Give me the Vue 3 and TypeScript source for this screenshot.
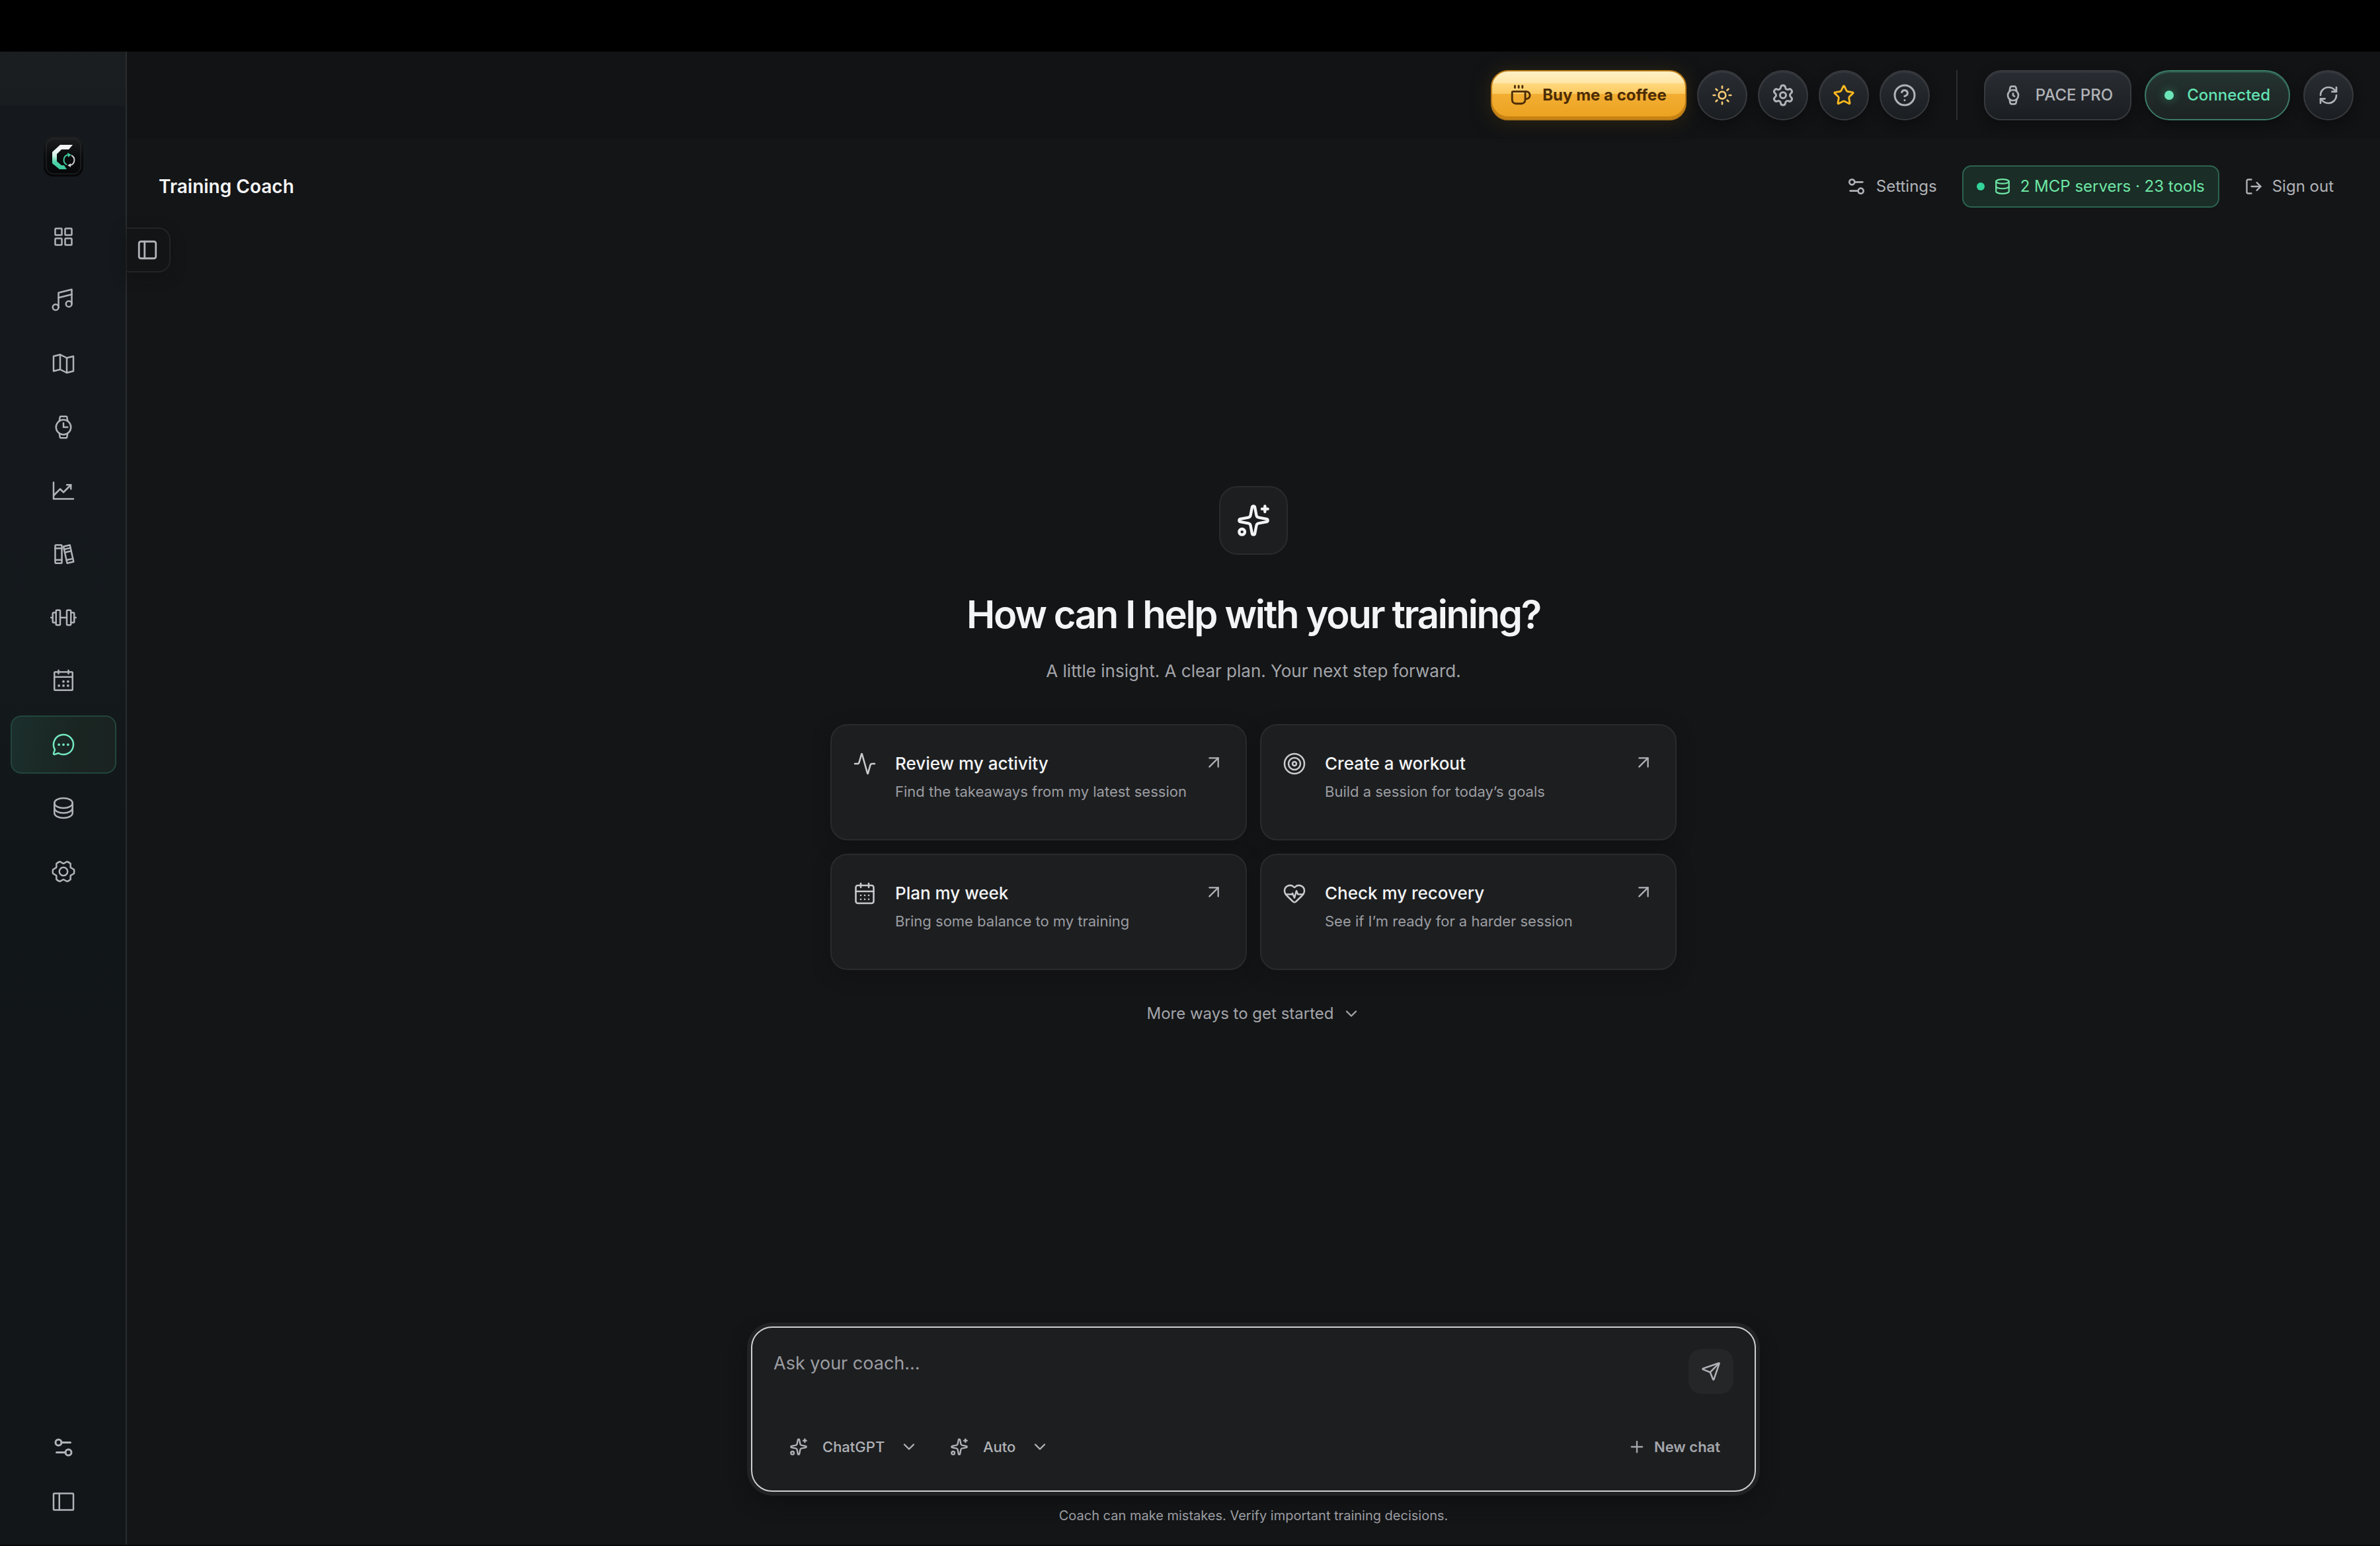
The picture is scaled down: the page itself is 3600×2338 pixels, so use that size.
<script setup lang="ts">
import { h, ref } from 'vue'

interface Glyph {
  box: number
  stroke: number
  lines: string[]
  dots?: string[]
}

const circle = (x: number, y: number, r: number): string =>
  `M${x - r} ${y}a${r} ${r} 0 1 0 ${2 * r} 0a${r} ${r} 0 1 0 ${-2 * r} 0Z`

const rect = (x: number, y: number, w: number, t: number, r: number): string =>
  `M${x + r} ${y}h${w - 2 * r}a${r} ${r} 0 0 1 ${r} ${r}v${t - 2 * r}a${r} ${r} 0 0 1 ${-r} ${r}h${2 * r - w}a${r} ${r} 0 0 1 ${-r} ${-r}v${2 * r - t}a${r} ${r} 0 0 1 ${r} ${-r}Z`

const large = (lines: string[], dots: string[] = []): Glyph => ({ box: 256, stroke: 16, lines, dots })
const small = (stroke: number, lines: string[]): Glyph => ({ box: 24, stroke, lines })

const glyphs: Record<string, Glyph> = {
  dashboard: large([rect(48, 48, 64, 64, 8), rect(144, 48, 64, 64, 8), rect(48, 144, 64, 64, 8), rect(144, 144, 64, 64, 8)]),
  music: large([circle(180, 164, 28), circle(52, 196, 28), 'M208 72L80 104', 'M80 196V56L208 24V164']),
  map: large(['M160 216L96 184L32 200V56L96 40L160 72L224 56V200Z', 'M160 72V216', 'M96 40V184']),
  clock: large([
    circle(128, 128, 72),
    'M128 88V128H168',
    'M88 68L94 31a8 8 0 0 1 8-7H154a8 8 0 0 1 8 7L168 68',
    'M88 188L94 225a8 8 0 0 0 8 7H154a8 8 0 0 0 8-7L168 188',
  ]),
  chart: large(['M224 208H32V48', 'M200 72L128 144L96 112L32 176', 'M200 112V72H160']),
  books: large([rect(48, 40, 64, 176, 8), 'M48 72H112', 'M48 184H112', 'M128 54L190 40L226 202L164 216Z', 'M134 82L196 68', 'M141 112L203 98', 'M157 186L219 172']),
  barbell: large([
    rect(56, 56, 40, 144, 8),
    rect(160, 56, 40, 144, 8),
    'M56 176H32a8 8 0 0 1-8-8V88a8 8 0 0 1 8-8H56',
    'M200 176h24a8 8 0 0 0 8-8V88a8 8 0 0 0-8-8H200',
    'M96 128H160',
    'M8 128H24',
    'M232 128H248',
  ]),
  calendar: large(
    [rect(40, 40, 176, 176, 8), 'M176 24V56', 'M80 24V56', 'M40 88H216'],
    [circle(128, 132, 12), circle(172, 132, 12), circle(84, 172, 12), circle(128, 172, 12), circle(172, 172, 12)],
  ),
  chat: large(
    ['M79.93 211.11a96 96 0 1 0-35-35L32.42 213.46a8 8 0 0 0 10.12 10.12Z'],
    [circle(84, 128, 12), circle(128, 128, 12), circle(172, 128, 12)],
  ),
  database: large([
    'M40 80a88 48 0 1 0 176 0a88 48 0 1 0-176 0Z',
    'M40 80v48c0 26.51 39.4 48 88 48s88-21.49 88-48V80',
    'M40 128v48c0 26.51 39.4 48 88 48s88-21.49 88-48v-48',
  ]),
  gear: large([
    circle(128, 128, 40),
    'M130.05,206.11c-1.34,0-2.69,0-4,0L94,224a104.61,104.61,0,0,1-34.11-19.2l-.12-36c-.71-1.12-1.38-2.25-2-3.41L25.9,147.24a99.15,99.15,0,0,1,0-38.46l31.84-18.1c.65-1.15,1.32-2.29,2-3.41l.16-36A104.58,104.58,0,0,1,94,32l32,17.89c1.34,0,2.69,0,4,0L162,32a104.61,104.61,0,0,1,34.11,19.2l.12,36c.71,1.12,1.38,2.25,2,3.41l31.85,18.14a99.15,99.15,0,0,1,0,38.46l-31.84,18.1c-.65,1.15-1.32,2.29-2,3.41l-.16,36A104.58,104.58,0,0,1,162,224Z',
  ]),
  sidebar: large([rect(32, 48, 192, 160, 8), 'M88 48V208']),
  panel: small(2, [rect(3, 3, 18, 18, 2), 'M9 3V21']),
  sliders: small(2, [circle(7, 7, 3), circle(17, 17, 3), 'M14 17H5', 'M19 7h-9']),
  coffee: small(2, ['M10 2v2', 'M14 2v2', 'M6 2v2', 'M16 8a1 1 0 0 1 1 1v8a4 4 0 0 1-4 4H7a4 4 0 0 1-4-4V9a1 1 0 0 1 1-1h14a4 4 0 1 1 0 8h-1']),
  sun: small(2, [circle(12, 12, 4), 'M12 2v2', 'M12 20v2', 'm4.93 4.93 1.41 1.41', 'm17.66 17.66 1.41 1.41', 'M2 12h2', 'M20 12h2', 'm6.34 17.66-1.41 1.41', 'm19.07 4.93-1.41 1.41']),
  settings: small(2, [
    circle(12, 12, 3),
    'M9.671 4.136a2.34 2.34 0 0 1 4.659 0 2.34 2.34 0 0 0 3.319 1.915 2.34 2.34 0 0 1 2.33 4.033 2.34 2.34 0 0 0 0 3.831 2.34 2.34 0 0 1-2.33 4.033 2.34 2.34 0 0 0-3.319 1.915 2.34 2.34 0 0 1-4.659 0 2.34 2.34 0 0 0-3.32-1.915 2.34 2.34 0 0 1-2.33-4.033 2.34 2.34 0 0 0 0-3.831A2.34 2.34 0 0 1 6.35 6.051a2.34 2.34 0 0 0 3.319-1.915',
  ]),
  star: small(2, ['M11.525 2.295a.53.53 0 0 1 .95 0l2.31 4.679a2.123 2.123 0 0 0 1.595 1.16l5.166.756a.53.53 0 0 1 .294.904l-3.736 3.638a2.123 2.123 0 0 0-.611 1.878l.882 5.14a.53.53 0 0 1-.771.56l-4.618-2.428a2.122 2.122 0 0 0-1.973 0L6.396 21.01a.53.53 0 0 1-.77-.56l.881-5.139a2.122 2.122 0 0 0-.611-1.879L2.16 9.795a.53.53 0 0 1 .294-.906l5.165-.755a2.122 2.122 0 0 0 1.597-1.16z']),
  help: small(2, [circle(12, 12, 10), 'M9.09 9a3 3 0 0 1 5.83 1c0 2-3 3-3 3', 'M12 17h.01']),
  watch: small(2, [circle(12, 12, 6), 'M12 10v2.2l1.6 1', 'm16.13 7.66-.81-4.05a2 2 0 0 0-2-1.61h-2.68a2 2 0 0 0-2 1.61l-.78 4.05', 'm7.88 16.36.8 4a2 2 0 0 0 2 1.61h2.72a2 2 0 0 0 2-1.61l.81-4.05']),
  refresh: small(2, ['M3 12a9 9 0 0 1 9-9 9.75 9.75 0 0 1 6.74 2.74L21 8', 'M21 3v5h-5', 'M21 12a9 9 0 0 1-9 9 9.75 9.75 0 0 1-6.74-2.74L3 16', 'M8 16H3v5']),
  servers: small(2, ['M3 5a9 3 0 1 0 18 0a9 3 0 1 0-18 0Z', 'M3 5v14a9 3 0 0 0 18 0V5', 'M3 12a9 3 0 0 0 18 0']),
  signout: small(2, ['m16 17 5-5-5-5', 'M21 12H9', 'M9 21H5a2 2 0 0 1-2-2V5a2 2 0 0 1 2-2h4']),
  sparkles: small(2, [
    'M11.017 2.814a1 1 0 0 1 1.966 0l1.051 5.558a2 2 0 0 0 1.594 1.594l5.558 1.051a1 1 0 0 1 0 1.966l-5.558 1.051a2 2 0 0 0-1.594 1.594l-1.051 5.558a1 1 0 0 1-1.966 0l-1.051-5.558a2 2 0 0 0-1.594-1.594l-5.558-1.051a1 1 0 0 1 0-1.966l5.558-1.051a2 2 0 0 0 1.594-1.594z',
    'M20 2v4',
    'M22 4h-4',
    circle(4, 20, 2),
  ]),
  activity: small(1.7, ['M22 12h-2.48a2 2 0 0 0-1.93 1.46l-2.35 8.36a.25.25 0 0 1-.48 0L9.24 2.18a.25.25 0 0 0-.48 0l-2.35 8.36A2 2 0 0 1 4.49 12H2']),
  target: small(1.7, [circle(12, 12, 10), circle(12, 12, 6), circle(12, 12, 2)]),
  week: small(1.7, [rect(3, 4, 18, 18, 2), 'M8 2v4', 'M16 2v4', 'M3 10h18', 'M8 14h.01', 'M12 14h.01', 'M16 14h.01', 'M8 18h.01', 'M12 18h.01', 'M16 18h.01']),
  heart: small(1.7, [
    'M2 9.5a5.5 5.5 0 0 1 9.591-3.676.56.56 0 0 0 .818 0A5.49 5.49 0 0 1 22 9.5c0 2.29-1.5 4-3 5.5l-5.492 5.313a2 2 0 0 1-3 .019L5 15c-1.5-1.5-3-3.2-3-5.5',
    'M3.22 13H9.5l.5-1 2 4.5 2-7 1.5 3.5h5.27',
  ]),
  arrow: small(1.7, ['M7 7h10v10', 'M7 17 17 7']),
  chevron: small(2, ['m6 9 6 6 6-6']),
  send: small(2, ['M14.536 21.686a.5.5 0 0 0 .937-.024l6.5-19a.496.496 0 0 0-.635-.635l-19 6.5a.5.5 0 0 0-.024.937l7.93 3.18a2 2 0 0 1 1.112 1.11z', 'm21.854 2.147-10.94 10.939']),
  plus: small(2, ['M5 12h14', 'M12 5v14']),
}

const Icon = (props: { name: string; size: number }) => {
  const g = glyphs[props.name]
  return h(
    'svg',
    {
      width: props.size,
      height: props.size,
      viewBox: `0 0 ${g.box} ${g.box}`,
      fill: 'none',
      stroke: 'currentColor',
      'stroke-width': g.stroke,
      'stroke-linecap': 'round',
      'stroke-linejoin': 'round',
      'aria-hidden': 'true',
    },
    [
      ...g.lines.map((d) => h('path', { d })),
      ...(g.dots ?? []).map((d) => h('path', { d, fill: 'currentColor', stroke: 'none' })),
    ],
  )
}
Icon.props = ['name', 'size']

const nav = ['dashboard', 'music', 'map', 'clock', 'chart', 'books', 'barbell', 'calendar', 'chat', 'database', 'gear']
const active = ref('chat')

const tools = [
  { name: 'sun', size: 32 },
  { name: 'settings', size: 36 },
  { name: 'star', size: 34 },
  { name: 'help', size: 36 },
]

const suggestions = [
  { icon: 'activity', title: 'Review my activity', text: 'Find the takeaways from my latest session' },
  { icon: 'target', title: 'Create a workout', text: 'Build a session for today’s goals' },
  { icon: 'week', title: 'Plan my week', text: 'Bring some balance to my training' },
  { icon: 'heart', title: 'Check my recovery', text: 'See if I’m ready for a harder session' },
]

const message = ref('')
const provider = ref('ChatGPT')
const mode = ref('Auto')
</script>

<template>
  <div class="app">
    <aside class="sidebar">
      <svg class="logo" width="62" height="62" viewBox="0 0 62 62" aria-hidden="true">
        <defs>
          <linearGradient id="tile" x1="0" y1="0" x2="0" y2="1">
            <stop offset="0" stop-color="#1d1e20" />
            <stop offset="0.5" stop-color="#0a0b0c" />
            <stop offset="1" stop-color="#060708" />
          </linearGradient>
          <linearGradient id="mark" x1="0" y1="0" x2="0" y2="1">
            <stop offset="0.2" stop-color="#f2f4f4" />
            <stop offset="0.45" stop-color="#c9efe2" />
            <stop offset="0.7" stop-color="#4fd3a8" />
            <stop offset="1" stop-color="#3cc79a" />
          </linearGradient>
        </defs>
        <rect x="1" y="1" width="60" height="60" rx="14" fill="url(#tile)" />
        <rect x="5" y="4" width="52" height="53" rx="11" fill="none" stroke="#2b2d2f" />
        <path d="M26 13H45L39 20H28L21 27V38L28 44H32L36 50H25L14 41V24Z" fill="url(#mark)" />
        <circle cx="40" cy="36" r="10" fill="#090a0b" />
        <g fill="none" stroke-width="2">
          <path d="M36 43A8 8 0 0 1 38 28" stroke="#3fc79c" />
          <path d="M43 29A8 8 0 0 1 41 44" stroke="#c9cbcc" />
        </g>
        <path d="M37 25L43 28L38 32Z" fill="#3fc79c" />
        <path d="M42 41L37 44L42 47Z" fill="#c9cbcc" />
      </svg>
      <nav class="nav" aria-label="Main">
        <button
          v-for="item in nav"
          :key="item"
          type="button"
          class="nav-item"
          :class="{ active: item === active }"
          :aria-label="item"
          @click="active = item"
        >
          <Icon :name="item" :size="40" />
        </button>
      </nav>
      <div class="side-foot">
        <button type="button" class="foot-item" aria-label="Preferences"><Icon name="sliders" :size="36" /></button>
        <button type="button" class="foot-item" aria-label="Sidebar"><Icon name="sidebar" :size="40" /></button>
      </div>
    </aside>

    <div class="page">
      <div class="topbar">
        <div class="tools">
          <button type="button" class="coffee"><Icon name="coffee" :size="34" />Buy me a coffee</button>
          <button v-for="t in tools" :key="t.name" type="button" class="round" :class="t.name" :aria-label="t.name">
            <Icon :name="t.name" :size="t.size" />
          </button>
        </div>
        <div class="rule"></div>
        <div class="device">
          <button type="button" class="model"><Icon name="watch" :size="32" />PACE PRO</button>
          <button type="button" class="status"><span class="led"></span>Connected</button>
          <button type="button" class="round" aria-label="Refresh"><Icon name="refresh" :size="32" /></button>
        </div>
      </div>

      <button type="button" class="drawer" aria-label="Conversations"><Icon name="panel" :size="34" /></button>

      <header class="head">
        <h1>Training Coach</h1>
        <div class="actions">
          <button type="button" class="ghost"><Icon name="sliders" :size="32" />Settings</button>
          <button type="button" class="mcp"><span class="dot"></span><Icon name="servers" :size="26" />2 MCP servers · 23 tools</button>
          <button type="button" class="ghost"><Icon name="signout" :size="28" />Sign out</button>
        </div>
      </header>

      <main class="hero">
        <div class="badge"><Icon name="sparkles" :size="52" /></div>
        <h2>How can I help with your training?</h2>
        <p class="lead">A little insight. A clear plan. Your next step forward.</p>
        <div class="cards">
          <button v-for="s in suggestions" :key="s.title" type="button" class="card">
            <Icon class="card-icon" :name="s.icon" :size="36" />
            <span class="card-body">
              <span class="card-title">{{ s.title }}</span>
              <span class="card-text">{{ s.text }}</span>
            </span>
            <Icon class="card-arrow" name="arrow" :size="32" />
          </button>
        </div>
        <button type="button" class="more">More ways to get started<Icon name="chevron" :size="28" /></button>
      </main>

      <div class="dock">
        <form class="composer" @submit.prevent>
          <div class="entry">
            <textarea v-model="message" aria-label="Message" placeholder="Ask your coach…"></textarea>
            <button type="submit" class="send" aria-label="Send"><Icon name="send" :size="30" /></button>
          </div>
          <div class="options">
            <label class="pick">
              <Icon name="sparkles" :size="28" />
              <select v-model="provider" aria-label="Provider"><option>ChatGPT</option></select>
              <Icon name="chevron" :size="28" />
            </label>
            <label class="pick">
              <Icon name="sparkles" :size="28" />
              <select v-model="mode" aria-label="Mode"><option>Auto</option></select>
              <Icon name="chevron" :size="28" />
            </label>
            <button type="button" class="new"><Icon name="plus" :size="28" />New chat</button>
          </div>
        </form>
        <p class="note">Coach can make mistakes. Verify important training decisions.</p>
      </div>
    </div>
  </div>
</template>

<style>
body {
  background: #141517;
}
</style>

<style scoped>
* {
  box-sizing: border-box;
}

.app {
  display: flex;
  min-height: 100vh;
  border-top: 78px solid #000;
  border-bottom: 2px solid #08090a;
  background: #141517;
  color: #b0b3b7;
  font-family: Inter, 'Liberation Sans', sans-serif;
  font-size: 24px;
  line-height: 32px;
}

button {
  display: flex;
  align-items: center;
  justify-content: center;
  margin: 0;
  padding: 0;
  border: 0;
  background: none;
  color: inherit;
  font: inherit;
  white-space: nowrap;
  cursor: pointer;
}

svg {
  flex: none;
}

h1,
h2,
p {
  margin: 0;
}

.sidebar {
  flex: none;
  display: flex;
  flex-direction: column;
  align-items: center;
  width: 192px;
  padding: 128px 0 28px;
  background: linear-gradient(#1a1e20 0, #191d20 80px, #15191d 84px, #14191c 40%, #111619 55%, #121619);
  box-shadow: inset -2px 0 #292c2e;
}

.logo {
  margin-bottom: 46px;
}

.nav,
.side-foot {
  display: flex;
  flex-direction: column;
  gap: 8px;
}

.nav-item {
  width: 160px;
  height: 88px;
  border: 2px solid transparent;
  border-radius: 16px;
}

.nav-item.active {
  border-color: #21463c;
  background: linear-gradient(100deg, #1b2f2c, #1a2522 60%, #1a2321);
  color: #74e8c0;
}

.side-foot {
  margin-top: auto;
}

.foot-item {
  width: 160px;
  height: 74px;
}

.page {
  position: relative;
  flex: 1;
  display: flex;
  flex-direction: column;
  min-width: 0;
}

.topbar {
  display: flex;
  align-items: center;
  justify-content: flex-end;
  gap: 40px;
  height: 132px;
  padding: 0 40px;
  background: #121315;
  font-weight: 500;
}

.tools {
  display: flex;
  gap: 16px;
}

.device {
  display: flex;
  gap: 20px;
}

.rule {
  width: 2px;
  height: 76px;
  background: #2a2c2e;
}

.round,
.model,
.status {
  height: 76px;
  border: 2px solid #37393d;
  background: linear-gradient(#292d33, #1b1e21);
  box-shadow: inset 0 2px #34383d, 0 6px 16px #0c0d0e;
}

.round {
  width: 76px;
  border-radius: 50%;
}

.sun {
  color: #f8cc74;
}

.star {
  color: #fbb91f;
}

.coffee {
  height: 76px;
  padding: 0 28px 0 26px;
  gap: 16px;
  border: 2px solid #b97a17;
  border-radius: 26px;
  background: linear-gradient(#fff0c4 0, #ffe6a6 18px, #ffd97f 18px, #fbc95f 34px, #f2ae33 34px, #eca11f 100%);
  box-shadow: inset 0 -4px #c88314, 0 2px 28px #2e2612;
  color: #4b2c06;
  font-weight: 700;
}

.model {
  gap: 18px;
  padding: 0 26px;
  border-radius: 26px;
}

.status {
  gap: 20px;
  padding: 0 28px;
  border-color: #3c7b66;
  border-radius: 38px;
  background: linear-gradient(#24342f, #1d2323);
  color: #63e2b3;
  box-shadow: inset 0 2px #2c5547, 0 6px 16px #0c0d0e;
}

.led {
  width: 14px;
  height: 14px;
  border-radius: 50%;
  background: #6ce5b9;
  box-shadow: 0 0 14px #2f7a60;
}

.drawer {
  position: absolute;
  top: 266px;
  left: 0;
  width: 66px;
  height: 68px;
  padding-right: 2px;
  border: 2px solid #222426;
  border-left: 0;
  border-radius: 0 18px 18px 0;
  background: #131416;
  box-shadow: 0 6px 20px #111214;
}

.head {
  display: flex;
  align-items: center;
  justify-content: space-between;
  height: 144px;
  padding: 0 48px;
}

h1 {
  color: #f3f4f5;
  font-size: 28px;
  font-weight: 600;
  line-height: 40px;
}

.actions {
  display: flex;
  gap: 16px;
}

.ghost,
.mcp {
  height: 64px;
  gap: 14px;
  border: 2px solid transparent;
  border-radius: 14px;
}

.ghost {
  padding: 0 20px;
}

.mcp {
  padding: 0 20px;
  border-color: #2c6350;
  background: #1a2d27;
  color: #6ee7a5;
}

.dot {
  width: 12px;
  height: 12px;
  border-radius: 50%;
  background: #34d399;
}

.hero {
  flex: 1;
  display: flex;
  flex-direction: column;
  align-items: center;
  justify-content: center;
}

.badge {
  display: flex;
  align-items: center;
  justify-content: center;
  width: 104px;
  height: 104px;
  border: 2px solid #2a2b2d;
  border-radius: 28px;
  background: #1d1e20;
  color: #f3f4f5;
}

h2 {
  margin-top: 54px;
  color: #f3f4f5;
  font-size: 58px;
  font-weight: 600;
  letter-spacing: -0.04em;
  line-height: 72px;
}

.lead {
  margin-top: 30px;
  color: #a3a5aa;
  font-size: 26px;
  line-height: 40px;
}

.cards {
  display: grid;
  grid-template-columns: 1fr 1fr;
  gap: 20px;
  width: 100%;
  max-width: 1280px;
  margin-top: 60px;
}

.card {
  align-items: flex-start;
  justify-content: flex-start;
  height: 176px;
  padding: 40px 32px 0;
  border: 2px solid #2a2b2d;
  border-radius: 26px;
  background: #1d1e20;
  box-shadow: 0 8px 24px #111214;
  text-align: left;
}

.card-icon {
  color: #c8cacd;
}

.card-body {
  flex: 1;
  display: flex;
  flex-direction: column;
  gap: 8px;
  margin-left: 28px;
}

.card-title {
  color: #f3f4f5;
  font-size: 26px;
  font-weight: 500;
  line-height: 36px;
}

.card-text {
  color: #9b9da2;
  font-size: 22px;
}

.more {
  height: 40px;
  margin-top: 46px;
  gap: 12px;
  color: #a3a5aa;
}

.dock {
  display: flex;
  flex-direction: column;
  align-items: center;
  padding: 72px 48px 28px;
}

.composer {
  display: flex;
  flex-direction: column;
  justify-content: space-between;
  width: 100%;
  max-width: 1520px;
  min-height: 250px;
  padding: 32px;
  border: 2px solid #cdcfd1;
  border-radius: 32px;
  background: #1d1e20;
  box-shadow: 0 0 0 6px #202224, 0 12px 30px #0e0f10;
}

.entry {
  display: flex;
  align-items: flex-start;
  gap: 24px;
}

textarea {
  flex: 1;
  height: 88px;
  padding: 0;
  border: 0;
  outline: 0;
  background: none;
  color: #f3f4f5;
  font: inherit;
  font-size: 27px;
  line-height: 44px;
  resize: none;
}

textarea::placeholder {
  color: #9b9da2;
  opacity: 1;
}

.send {
  width: 68px;
  height: 68px;
  border-radius: 20px;
  background: #252628;
}

.options {
  display: flex;
  align-items: center;
  height: 68px;
  font-size: 22px;
  font-weight: 500;
}

.pick {
  display: flex;
  align-items: center;
  gap: 22px;
  padding: 0 24px;
}

select {
  appearance: none;
  margin: 0;
  padding: 0;
  border: 0;
  outline: 0;
  background: none;
  color: inherit;
  font: inherit;
}

.new {
  gap: 12px;
  margin-left: auto;
  padding: 0 20px;
  color: #a3a6ab;
  font-weight: 600;
}

.note {
  margin-top: 20px;
  color: #9b9da2;
  font-size: 20px;
}
</style>
